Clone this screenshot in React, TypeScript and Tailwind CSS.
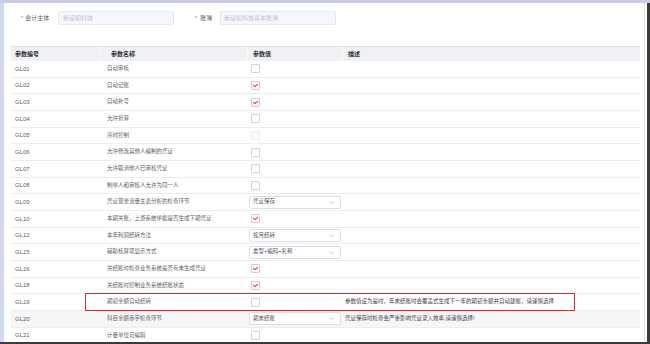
import React from "react";

type Kind = "check" | "checked" | "disabled" | "select";
type Row = { code: string; name: string; kind: Kind; value?: string; desc?: string; hl?: boolean; gray?: boolean };

const rows: Row[] = [
  { code: "GL01", name: "自动审核", kind: "check" },
  { code: "GL02", name: "自动记账", kind: "checked" },
  { code: "GL03", name: "自动补号", kind: "checked" },
  { code: "GL04", name: "允许折算", kind: "check" },
  { code: "GL05", name: "序时控制", kind: "disabled" },
  { code: "GL06", name: "允许修改其他人编制的凭证", kind: "check" },
  { code: "GL07", name: "允许取消他人已审核凭证", kind: "check" },
  { code: "GL08", name: "制单人和审核人允许为同一人", kind: "check" },
  { code: "GL09", name: "凭证现金流量主表分析的检查环节", kind: "select", value: "凭证保存" },
  { code: "GL10", name: "本期关账，上游系统单据是否生成下期凭证", kind: "checked" },
  { code: "GL12", name: "本年利润结转方法", kind: "select", value: "按月结转" },
  { code: "GL15", name: "辅助核算项显示方式", kind: "select", value: "类型+编码+名称" },
  { code: "GL16", name: "关结账时检查业务系统是否有未生成凭证", kind: "checked" },
  { code: "GL18", name: "关结账时控制业务系统结账状态", kind: "checked" },
  {
    code: "GL19",
    name: "期初余额自动结转",
    kind: "check",
    desc: "参数值设为是时，年末结账时会覆盖式生成下一年的期初余额并自动建账，请谨慎选择",
    hl: true,
  },
  {
    code: "GL20",
    name: "科目余额赤字检查环节",
    kind: "select",
    value: "期末结账",
    desc: "凭证保存时检查会严重影响凭证录入效率,请谨慎选择!",
    gray: true,
  },
  { code: "GL21", name: "计量单位可编辑", kind: "check" },
];

function Checkbox({ kind }: { kind: Kind }) {
  const cls =
    kind === "disabled"
      ? "border-[#ededed] bg-[#fafafa]"
      : kind === "checked"
      ? "border-[#ecc3c6] bg-[#fffafa]"
      : "border-[#cfd3da] bg-white";
  return (
    <span className={`flex h-[9px] w-[9px] items-center justify-center rounded-[1px] border ${cls}`}>
      {kind === "checked" && (
        <svg width="7" height="7" viewBox="0 0 7 7">
          <path d="M1.5 3.3 L3 4.6 L5.6 2.3" fill="none" stroke="#dc3a44" strokeWidth="1.1" strokeLinecap="round" strokeLinejoin="round" />
        </svg>
      )}
    </span>
  );
}

function Select({ value }: { value: string }) {
  return (
    <div className="flex h-[13px] w-[92px] items-center justify-between rounded-[2px] border border-[#dcdfe6] bg-white pl-[3px] pr-[6px] text-[5.5px] text-[#505256]">
      <span>{value}</span>
      <svg width="5" height="3" viewBox="0 0 5 3">
        <path d="M0.5 0.5 L2.5 2.5 L4.5 0.5" fill="none" stroke="#b8bcc4" strokeWidth="0.8" />
      </svg>
    </div>
  );
}

export default function App() {
  return (
    <div className="flex h-[344px] w-[650px] flex-col overflow-hidden bg-white font-['Liberation_Sans','Noto_Sans_CJK_SC',sans-serif] leading-none">
      <div className="h-[3px] w-full shrink-0 bg-[#c9cce8]" />
      <div className="flex min-h-0 flex-1">
        <div className="w-[4px] shrink-0 bg-[#d2d9ee]" />
        <div className="flex min-w-0 flex-1 flex-col overflow-hidden border-r border-[#e6e6e6]">
          {/* form row */}
          <div className="mt-[8px] flex h-[14px] items-center pl-[17px] text-[6px]">
            <div className="flex w-[37px] items-center">
              <span className="text-[#f56c6c]">*</span>
              <span className="ml-[2px] text-[#606266]">会计主体</span>
            </div>
            <div className="flex h-[14px] w-[116px] items-center rounded-[2px] border border-[#e4e7ed] bg-[#f5f7fa] pl-[4px] text-[#c0c4cc]">
              新设初科技
            </div>
            <div className="ml-[21px] flex w-[25px] items-center">
              <span className="text-[#f56c6c]">*</span>
              <span className="ml-[3px] text-[#606266]">账簿</span>
            </div>
            <div className="flex h-[14px] w-[116px] items-center rounded-[2px] border border-[#e4e7ed] bg-[#f5f7fa] pl-[3px] text-[#c0c4cc]">
              新设初科技基本账簿
            </div>
          </div>

          {/* table */}
          <div className="ml-[7px] mt-[21px] w-[629px] text-[5.5px]">
            <div className="grid h-[15px] grid-cols-[89px_148px_95px_297px] items-center border-t border-[#dcdfe6] bg-[#eff1f5] text-[6px] font-semibold text-[#303133]">
              <div className="flex h-full items-center border-r border-[#fafbfc] pl-[4px]">参数编号</div>
              <div className="flex h-full items-center border-r border-[#fafbfc] pl-[11px]">参数名称</div>
              <div className="flex h-full items-center border-r border-[#fafbfc] pl-[5px]">参数值</div>
              <div className="flex h-full items-center pl-[5px]">描述</div>
            </div>
            {rows.map((r) => (
              <div
                key={r.code}
                className={`relative grid h-[16.67px] grid-cols-[89px_148px_95px_297px] items-center border-b border-[#ebeef5] text-[#606266] ${
                  r.gray ? "bg-[#f5f6f8]" : "bg-white"
                }`}
              >
                <div className="pl-[4px] text-[6px]">{r.code}</div>
                <div className="pl-[7px] whitespace-nowrap">{r.name}</div>
                <div className={r.kind === "select" ? "pl-[1px]" : "pl-[3px]"}>
                  {r.kind === "select" ? <Select value={r.value ?? ""} /> : <Checkbox kind={r.kind} />}
                </div>
                <div className="whitespace-nowrap pl-[2px] text-[#404246]">{r.desc ?? ""}</div>
                {r.hl && (
                  <div className="pointer-events-none absolute left-[74px] top-[-1px] h-[17.5px] w-[490px] border-[1.5px] border-[#e3262b]" />
                )}
              </div>
            ))}
          </div>
        </div>
        <div className="w-[2px] shrink-0 bg-white" />
        <div className="w-[3px] shrink-0 bg-[#3b3b3b]" />
      </div>
      <div className="h-[2px] w-full shrink-0 bg-[#3b3b3b]" />
    </div>
  );
}
